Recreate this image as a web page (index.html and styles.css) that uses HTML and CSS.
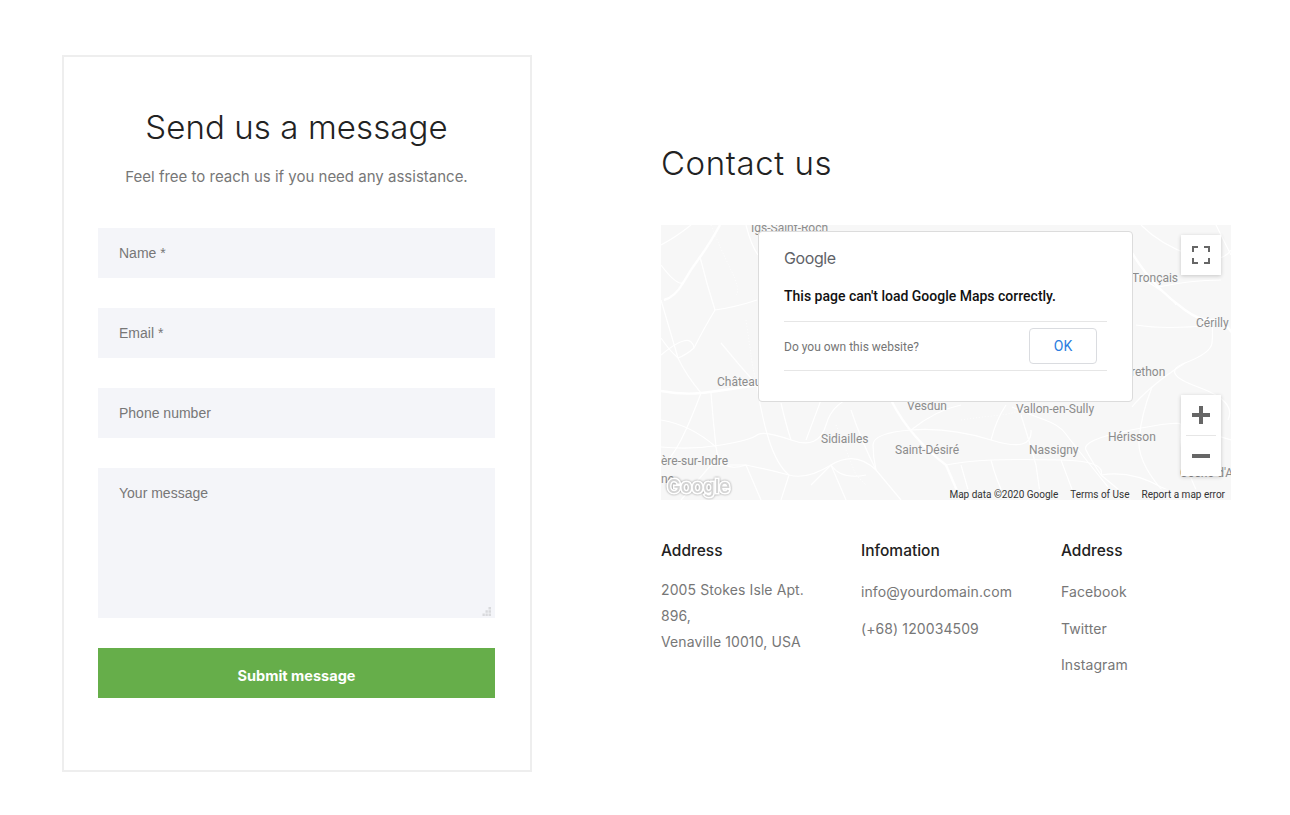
FILE: index.html
```html
<!DOCTYPE html>
<html lang="en">
<head>
<meta charset="utf-8">
<title>Contact us</title>
<link rel="stylesheet" href="styles.css">
</head>
<body>
<main class="page">
  <section class="card">
    <h2 class="card-title">Send us a message</h2>
    <p class="card-sub">Feel free to reach us if you need any assistance.</p>
    <form class="form">
      <input class="field" type="text" placeholder="Name *">
      <input class="field" type="text" placeholder="Email *">
      <input class="field" type="text" placeholder="Phone number">
      <div class="area-wrap">
        <textarea class="field area" placeholder="Your message"></textarea>
        <svg class="grip" width="9" height="9" viewBox="0 0 9 9"><path d="M6.5 0H9V2.500H6.500ZM3.500 3.200H5.800V5.700H3.500ZM6.500 3.200H9V5.700H6.500ZM.5 6.500H2.800V9H.5ZM3.500 6.500H5.800V9H3.500ZM6.500 6.500H9V9H6.500Z"/></svg>
      </div>
      <button class="submit" type="button">Submit message</button>
    </form>
  </section>
  <section class="info">
    <h1 class="info-title">Contact us</h1>
    <div class="map">
      <svg class="map-canvas" width="570" height="275" viewBox="0 0 570 275">
        <g class="roads-major">
          <path d="M59 0Q48 20 39 32T22 58T3 75"/>
          <path d="M0 166Q22 170 40 168T96 160L170 160"/>
          <path d="M471 28Q485 50 497 62T524 85T551 95T574 112"/>
          <path d="M230 175Q240 195 255 212T285 240L300 275"/>
        </g>
        <g class="roads">
          <path d="M39 32Q46 60 54 85Q75 82 96 75"/>
          <path d="M54 85Q42 105 33 123Q25 130 17 133Q8 125 0 113"/>
          <path d="M17 133Q25 150 40 168"/>
          <path d="M60 118Q78 140 96 160"/>
          <path d="M40 168Q30 195 20 215T0 240"/>
          <path d="M0 222Q30 225 60 220T96 210T130 215T165 200T200 170"/>
          <path d="M96 160Q100 190 108 215T128 250L120 275"/>
          <path d="M50 168Q52 195 55 222T85 240L100 275"/>
          <path d="M85 240Q110 245 128 250T170 240T215 245L240 275"/>
          <path d="M160 175L145 215"/>
          <path d="M215 245Q212 232 212 220T250 205T330 215T370 205"/>
          <path d="M285 240Q305 236 330 235T400 235T440 250L470 275"/>
          <path d="M351 182Q370 190 384 195T404 208T447 262"/>
          <path d="M360 190Q368 215 375 240L380 275"/>
          <path d="M551 95Q552 108 551 118T524 138T537 162T567 195"/>
          <path d="M524 138Q505 150 491 162T471 182"/>
          <path d="M491 162Q480 190 478 215T510 275"/>
          <path d="M440 250Q430 235 425 225T470 205T520 200L570 215"/>
          <path d="M555 0L570 30"/>
          <path d="M475 50Q510 70 515 80"/>
          <path d="M475 100Q505 105 551 100"/>
          <path d="M30 0Q15 12 0 20"/>
          <path d="M0 75L17 133"/>
          <path d="M150 260L170 240L185 275"/>
          <path d="M20 275L50 240L85 240"/>
          <path d="M0 195Q30 200 55 222"/>
          <path d="M300 240L310 275"/>
          <path d="M400 235L415 275"/>
          <path d="M0 40Q15 60 22 58"/>
          <path d="M85 0Q90 20 97 30"/>
          <path d="M0 130Q30 105 33 123"/>
          <path d="M120 178Q125 200 130 215"/>
          <path d="M190 185Q200 215 215 245"/>
          <path d="M250 205Q275 185 300 180"/>
          <path d="M330 215Q335 195 345 180"/>
          <path d="M170 240Q180 255 205 250"/>
          <path d="M330 235Q335 255 345 275"/>
          <path d="M440 250Q470 245 500 262L530 275"/>
          <path d="M520 200Q515 225 540 275"/>
          <path d="M480 0Q500 20 530 30T570 25"/>
          <path d="M497 62Q530 55 560 55"/>
        </g>
        <g class="roads-dotted">
          <path d="M50 0Q60 25 70 45T75 70"/>
          <path d="M85 95Q88 115 90 130T96 160"/>
          <path d="M175 200Q185 225 195 250L205 260"/>
          <path d="M300 195Q320 192 340 190T375 175"/>
        </g>
        <g class="map-labels">
          <text x="90" y="7">Igs-Saint-Roch</text>
          <text x="471" y="57">Tronçais</text>
          <text x="535" y="102">Cérilly</text>
          <text x="56" y="161">Château</text>
          <text x="470" y="151">rethon</text>
          <text x="246" y="185">Vesdun</text>
          <text x="355" y="188">Vallon-en-Sully</text>
          <text x="160" y="218">Sidiailles</text>
          <text x="234" y="229">Saint-Désiré</text>
          <text x="368" y="229">Nassigny</text>
          <text x="447" y="216">Hérisson</text>
          <text x="0" y="240">ère-sur-Indre</text>
          <text x="0" y="258">ne</text>
          <text x="519" y="252">Cosne-d'A</text>
        </g>
        <text class="map-logo" x="6" y="268">Google</text>
      </svg>
      <div class="dialog">
        <div class="dialog-logo">Google</div>
        <p class="dialog-msg">This page can't load Google Maps correctly.</p>
        <div class="dialog-row">
          <span class="dialog-q">Do you own this website?</span>
          <span class="dialog-ok">OK</span>
        </div>
      </div>
      <div class="ctl ctl-full">
        <svg width="18" height="18" viewBox="0 0 18 18"><path class="ctl-ink" d="M0 6V0H6V2H2V6ZM12 0H18V6H16V2H12ZM0 12H2V16H6V18H0ZM16 12H18V18H12V16H16Z"/></svg>
      </div>
      <div class="ctl ctl-zoom">
        <button class="zoom-btn" type="button" aria-label="Zoom in"><svg width="18" height="18" viewBox="0 0 18 18"><path class="ctl-ink" d="M7 0H11V7H18V11H11V18H7V11H0V7H7Z"/></svg></button>
        <span class="zoom-sep"></span>
        <button class="zoom-btn" type="button" aria-label="Zoom out"><svg width="18" height="18" viewBox="0 0 18 18"><path class="ctl-ink" d="M0 7H18V11H0Z"/></svg></button>
      </div>
      <div class="attrib">
        <span>Map data ©2020 Google</span>
        <span>Terms of Use</span>
        <span>Report a map error</span>
      </div>
    </div>
    <div class="cols">
      <div class="col">
        <h3 class="col-title">Address</h3>
        <p class="col-text">2005 Stokes Isle Apt. 896,<br>Venaville 10010, USA</p>
      </div>
      <div class="col">
        <h3 class="col-title">Infomation</h3>
        <ul class="col-list">
          <li>info@yourdomain.com</li>
          <li>(+68) 120034509</li>
        </ul>
      </div>
      <div class="col">
        <h3 class="col-title">Address</h3>
        <ul class="col-list">
          <li>Facebook</li>
          <li>Twitter</li>
          <li>Instagram</li>
        </ul>
      </div>
    </div>
  </section>
</main>
</body>
</html>
```

FILE: styles.css
```css
* { box-sizing: border-box; }
html, body { margin: 0; background: #fff; }
body { font-family: Inter, "Liberation Sans", sans-serif; color: #222; overflow: hidden; }
.page { display: flex; align-items: flex-start; padding: 55px 0 0 62px; height: 815px; }

.card { width: 470px; height: 717px; border: 2px solid #eeeeee; padding: 46px 35px 0 34px; }
.card-title { margin: 0; text-align: center; font-size: 33px; line-height: 48px; font-weight: 300; letter-spacing: 0.1px; color: #222; }
.card-sub { margin: 13px 0 0; text-align: center; font-size: 15px; line-height: 26px; color: #777; }
.form { display: flex; flex-direction: column; gap: 30px; margin-top: 38px; }
.field { display: block; width: 100%; height: 50px; border: 0; border-radius: 0; outline: 0; background: #f4f5f9; padding: 0 21px; font: 14px "Liberation Sans", Arial, sans-serif; color: #777; }
.field::placeholder { color: #777; opacity: 1; }
.area-wrap { position: relative; height: 150px; }
.area { height: 150px; padding: 17px 21px; resize: none; }
.grip { position: absolute; right: 4px; bottom: 2px; fill: #d8d9dc; pointer-events: none; }
.submit { height: 50px; border: 0; background: #66ae4a; color: #fff; font: 700 14.5px Inter, sans-serif; padding-top: 5px; }

.info { width: 570px; margin-left: 129px; padding-top: 84px; }
.info-title { margin: 0; font-size: 33px; line-height: 48px; font-weight: 300; letter-spacing: 0.6px; color: #222; }
.map { position: relative; width: 570px; height: 275px; margin-top: 38px; background: #f7f7f7; overflow: hidden; font-family: Roboto, sans-serif; }
.map-canvas { display: block; }
.roads, .roads-major, .roads-dotted { fill: none; stroke: #fff; stroke-linejoin: round; }
.roads { stroke-width: 1.2; }
.roads-major { stroke-width: 2.4; }
.roads-dotted { stroke-width: 1; stroke-dasharray: 1 2; }
.map-labels { font: 12px Roboto, sans-serif; fill: #8c8c8c; }
.map-logo { font: 500 18.500px Inter, sans-serif; fill: #d4d4d4; stroke: #fff; stroke-width: 3px; paint-order: stroke; filter: drop-shadow(0 0 1px rgba(0,0,0,.4)); }

.dialog { position: absolute; left: 97px; top: 6px; width: 375px; height: 171px; background: #fff; border: 1px solid #dcdcdc; border-radius: 4px; padding: 16px 25px 0; }
.dialog-logo { font: 400 16px/20px Inter, sans-serif; color: #5f6368; letter-spacing: -0.4px; }
.dialog-msg { margin: 18px 0 0; padding-bottom: 15px; font: 500 14px/20px Roboto, sans-serif; color: #111; border-bottom: 1px solid #e6e6e6; }
.dialog-row { display: flex; align-items: center; justify-content: space-between; height: 49px; padding-right: 10px; border-bottom: 1px solid #e6e6e6; }
.dialog-q { font: 12px Roboto, sans-serif; color: #757575; padding-top: 2px; }
.dialog-ok { display: flex; align-items: center; justify-content: center; width: 68px; height: 36px; border: 1px solid #dadce0; border-radius: 4px; font: 14px Roboto, sans-serif; color: #2b7de0; }

.ctl { position: absolute; right: 10px; width: 40px; background: #fff; box-shadow: 0 1px 4px rgba(0,0,0,.2); }
.ctl-full { top: 10px; height: 40px; display: flex; align-items: center; justify-content: center; }
.ctl-zoom { top: 170px; height: 81px; display: flex; flex-direction: column; align-items: center; }
.ctl-ink { fill: #666; }
.zoom-btn { display: flex; align-items: center; justify-content: center; width: 40px; height: 40px; border: 0; padding: 0; background: none; }
.zoom-sep { width: 30px; height: 1px; background: #e6e6e6; }
.attrib { position: absolute; right: 0; bottom: 0; height: 11px; display: flex; gap: 12px; padding: 0 6px; background: rgba(247,247,247,.7); font: 10px/11px Roboto, sans-serif; color: #333; }

.cols { display: grid; grid-template-columns: 200px 200px 170px; margin-top: 40px; }
.col { padding-right: 30px; }
.col-title { margin: 0; font-size: 15.5px; line-height: 22px; font-weight: 500; color: #222; }
.col-text { margin: 15px 0 0; font-size: 14px; line-height: 26px; color: #777; letter-spacing: .1px; }
.col-list { list-style: none; margin: 17px 0 0; padding: 0; font-size: 14px; line-height: 26px; color: #777; letter-spacing: .1px; display: flex; flex-direction: column; gap: 10.5px; }
```
